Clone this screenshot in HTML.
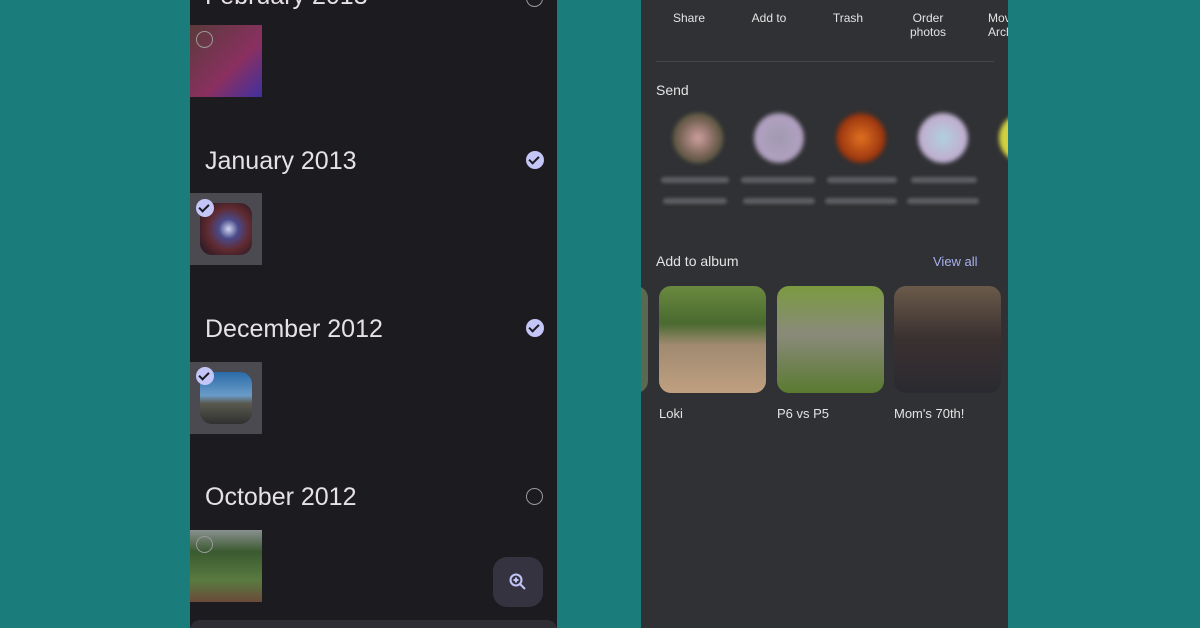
<!DOCTYPE html>
<html style="overflow:hidden;height:628px"><head><style>
body{margin:0;width:1200px;height:628px;background:#1b7c7c;position:relative;overflow:hidden;font-family:"Liberation Sans",sans-serif}
.l{position:absolute;left:190px;top:0;width:367px;height:628px;background:#1c1b1f;overflow:hidden}
.r{position:absolute;left:641px;top:0;width:367px;height:628px;background:#303134;overflow:hidden}
.h{position:absolute;left:15px;color:#e6e1e5;font-size:25px}
.ck{position:absolute;width:18px;height:18px;border-radius:50%;background:#c4c6f8}
.ck:after{content:"";position:absolute;left:5px;top:3px;width:4px;height:8px;border:solid #1c1b1f;border-width:0 2px 2px 0;transform:rotate(45deg)}
.oc{position:absolute;width:15px;height:15px;border-radius:50%;border:1.5px solid #999}
.th{position:absolute;left:0;width:72px;height:72px}
.sel{background:#4a4a50}
.sel div{position:absolute;left:10px;top:10px;width:52px;height:52px;border-radius:12px}
.t{position:absolute;color:#e3e3e3;font-size:12px;text-align:center;width:80px;line-height:14px}
.av{position:absolute;top:113px;width:50px;height:50px;border-radius:50%;filter:blur(2px)}
.bl{position:absolute;height:6px;background:#5c5e62;border-radius:3px;filter:blur(1.5px)}
.al{position:absolute;top:286px;width:107px;height:107px;border-radius:12px}
.an{position:absolute;top:406px;color:#e3e3e3;font-size:13px}
</style></head><body>
<div class="l">
<div class="h" style="top:-18px">February 2013</div>
<div class="oc" style="left:336px;top:-10px"></div>
<div class="th" style="top:25px;background:linear-gradient(135deg,#5a3a3a,#8a3060 60%,#4030a0)"></div>
<div class="oc" style="left:6px;top:31px"></div>
<div class="h" style="top:147px">January 2013</div>
<div class="ck" style="left:336px;top:151px"></div>
<div class="th sel" style="top:193px"><div style="background:radial-gradient(circle at 55% 50%,#d0d8f0,#4a4a8a 25%,#602a30 55%,#1a1420)"></div></div>
<div class="ck" style="left:6px;top:199px"></div>
<div class="h" style="top:315px">December 2012</div>
<div class="ck" style="left:336px;top:319px"></div>
<div class="th sel" style="top:362px"><div style="background:linear-gradient(#2b6aa8,#6a9cc8 45%,#5a5a50 60%,#303030)"></div></div>
<div class="ck" style="left:6px;top:367px"></div>
<div class="h" style="top:483px">October 2012</div>
<div class="oc" style="left:336px;top:488px"></div>
<div class="th" style="top:530px;background:linear-gradient(#8a9090,#3a5a30 30%,#5a7a40 70%,#6a4a3a)"></div>
<div class="oc" style="left:6px;top:536px"></div>
<div style="position:absolute;left:303px;top:557px;width:50px;height:50px;border-radius:14px;background:#34333f"></div>
<svg style="position:absolute;left:318px;top:572px" width="20" height="20" viewBox="0 0 20 20"><circle cx="8" cy="8" r="5.5" fill="none" stroke="#c4c6f8" stroke-width="2"/><path d="M12 12l5 5M8 5.5v5M5.5 8h5" stroke="#c4c6f8" stroke-width="2"/></svg>
<div style="position:absolute;left:0;top:620px;width:367px;height:20px;border-radius:12px;background:#2e2d33"></div>
</div>
<div class="r">
<div class="t" style="left:8px;top:11px">Share</div>
<div class="t" style="left:88px;top:11px">Add to</div>
<div class="t" style="left:167px;top:11px">Trash</div>
<div class="t" style="left:247px;top:11px">Order<br>photos</div>
<div class="t" style="left:327px;top:11px;text-align:left;padding-left:20px">Move<br>Archi</div>
<div style="position:absolute;left:15px;top:61px;width:338px;height:1px;background:#45474a"></div>
<div style="position:absolute;left:15px;top:82px;color:#e3e3e3;font-size:14px">Send</div>
<div class="av" style="left:32px;background:radial-gradient(#d0a0a0,#6a5a4a 60%,#4a7a3a)"></div>
<div class="av" style="left:113px;background:radial-gradient(#a09ab0,#b0a0c0 60%,#908aa0)"></div>
<div class="av" style="left:195px;background:radial-gradient(#e07020,#a03a10 60%,#301010)"></div>
<div class="av" style="left:277px;background:radial-gradient(#b0d0e0,#c0b0d0 60%,#a0a0c0)"></div>
<div class="av" style="left:358px;background:#d0d040"></div>
<div class="bl" style="left:20px;top:177px;width:68px"></div><div class="bl" style="left:100px;top:177px;width:74px"></div><div class="bl" style="left:186px;top:177px;width:70px"></div><div class="bl" style="left:270px;top:177px;width:66px"></div>
<div class="bl" style="left:22px;top:198px;width:64px"></div><div class="bl" style="left:102px;top:198px;width:72px"></div><div class="bl" style="left:184px;top:198px;width:72px"></div><div class="bl" style="left:266px;top:198px;width:72px"></div>
<div style="position:absolute;left:15px;top:253px;color:#e3e3e3;font-size:14px">Add to album</div>
<div style="position:absolute;left:292px;top:254px;color:#a8b0f0;font-size:13px">View all</div>
<div class="al" style="left:-100px;background:#5a6a50"></div>
<div class="al" style="left:18px;background:linear-gradient(#6a8a40,#4a6a30 35%,#a08a70 55%,#c0a080)"></div>
<div class="al" style="left:136px;background:linear-gradient(#7a9a40,#8a8a7a 45%,#5a7a30)"></div>
<div class="al" style="left:253px;background:linear-gradient(#6a5a4a,#3a3030 50%,#2a2a30)"></div>
<div class="an" style="left:18px">Loki</div>
<div class="an" style="left:136px">P6 vs P5</div>
<div class="an" style="left:253px">Mom's 70th!</div>
</div>
</body></html>
